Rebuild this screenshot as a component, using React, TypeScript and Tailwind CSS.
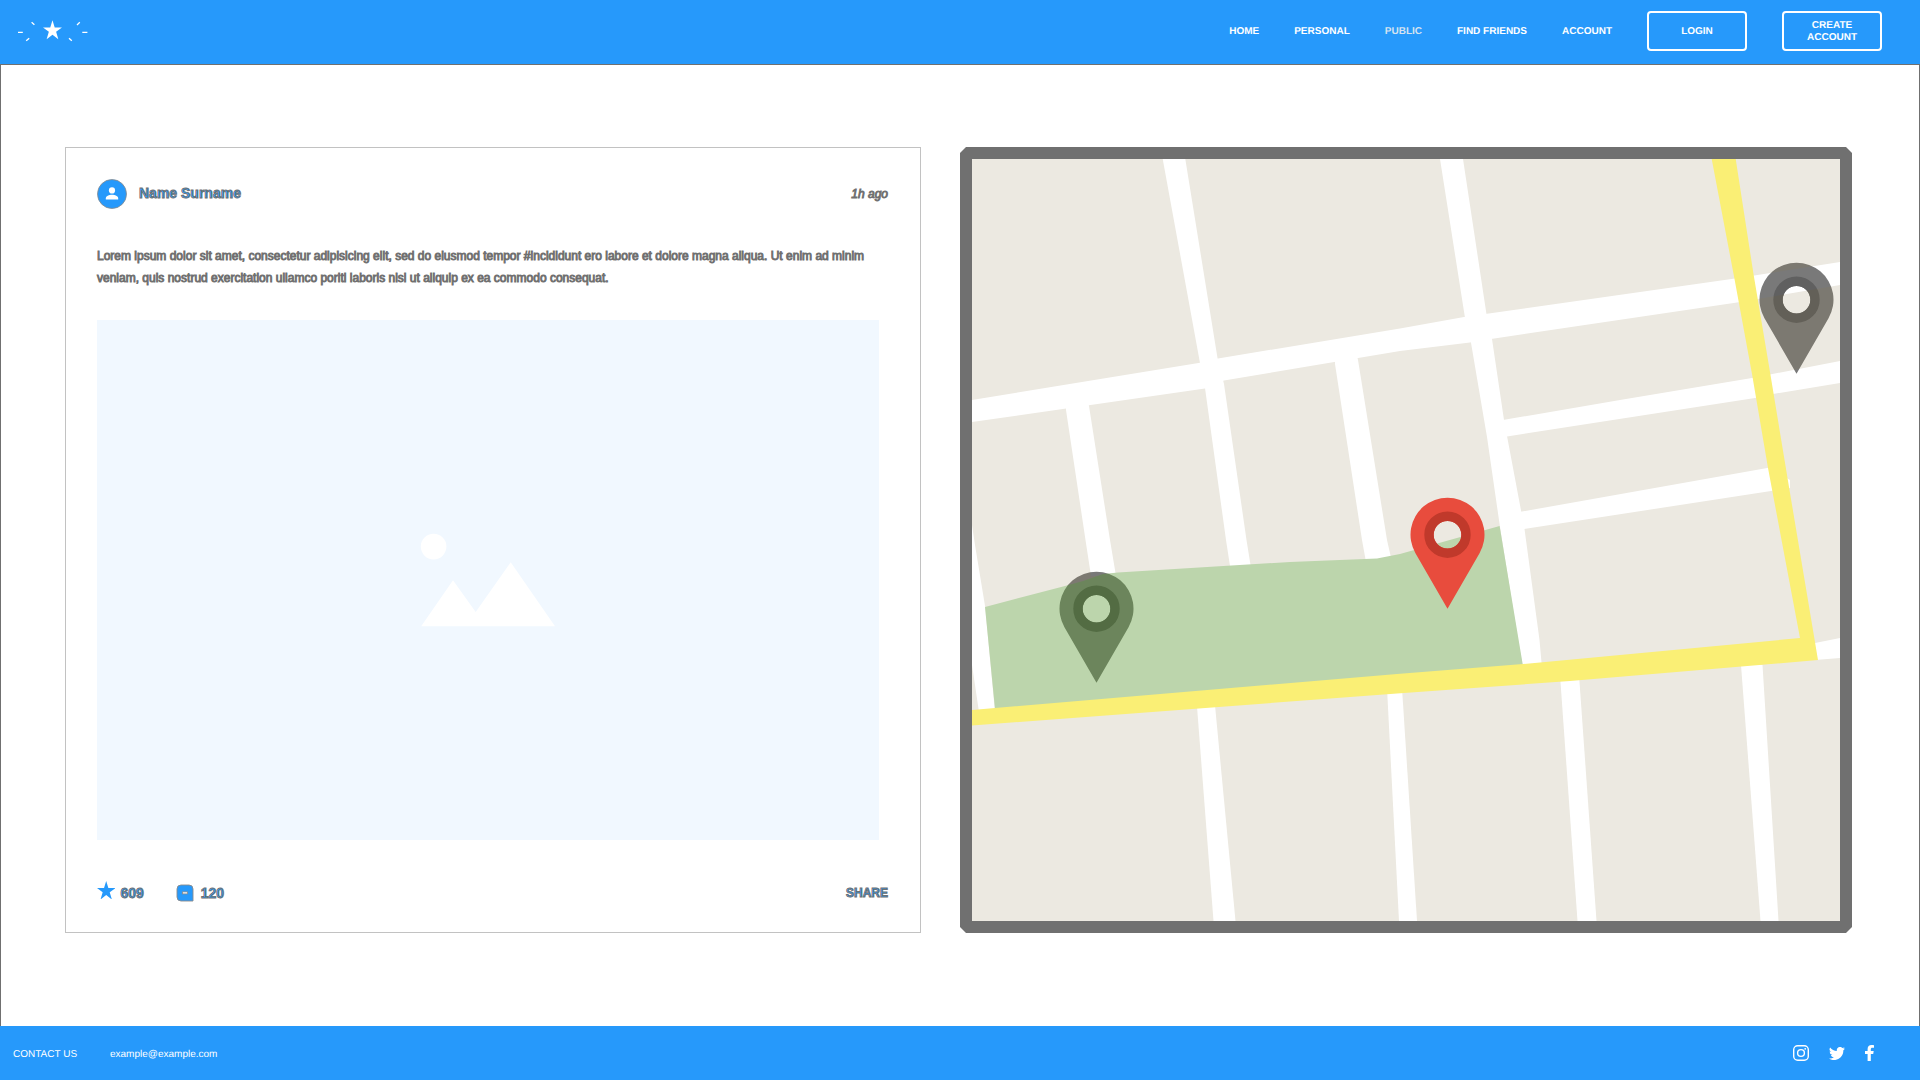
const NAV = ["HOME", "PERSONAL", "PUBLIC", "FIND FRIENDS", "ACCOUNT"];

const STAR = "12,0 14.83,9.12 24,9.12 16.6,14.6 19.4,24 12,18.3 4.6,24 7.4,14.6 0,9.12 9.17,9.12";

const ROADS = [
  "1162.7,159 1185.3,159 1217.5,358 1224,384 1246.5,540 1251,568 1230.3,568 1226,540 1205,388 1200,363",
  "972,400 1200,362.7 1218,358.5 1400,328.5 1464,317 1735,278.5 1840,262 1840,285 1737,302.5 1491,339 1470,342.5 1400,351 1224,380.5 1205,388.5 972,422",
  "1066,400 1087,398 1089,406 1110,540 1116,576 1091,576 1085.5,540 1066,410",
  "1335,356 1356,352 1358,360 1387,540 1392,562 1366,562 1362,540 1335,364",
  "1440,159 1463,159 1486.3,313 1492,339 1504,420 1524.5,529 1539.5,640 1542,668 1523,668 1518,640 1500,527 1487,437 1470.7,341 1464.7,316",
  "1500,420.5 1620,400 1752,378 1840,361 1840,383 1773,394 1755,398 1507,436.5 1500,436.5",
  "1514,513 1770,467.5 1790,480 1790,488 1771,491 1524,529 1514,530",
  "1815,643 1840,638 1840,658 1815,660",
  "972,525 975,545 985.2,607 995,712 979,712 972,665",
  "1196.5,700 1214.5,700 1235.5,921 1213.5,921",
  "1387,688 1402,688 1417,921 1399,921",
  "1560,675 1579,675 1596.5,921 1577.5,921",
  "1741,665 1762.5,665 1778.5,921 1760.5,921",
];

function Pin({ x, y, muted = false }: { x: number; y: number; muted?: boolean }) {
  return (
    <g transform={`translate(${x} ${y})`} className={muted ? "mix-blend-luminosity" : ""}>
      <path
        fillRule="evenodd"
        fill="#E84C3D"
        d="M0 74L-32.04 18.5A37 37 0 1 1 32.04 18.5ZM0 -13.8A13.8 13.8 0 1 0 0 13.8A13.8 13.8 0 1 0 0 -13.8Z"
      />
      <circle r="18.5" fill="none" stroke="#C0392B" strokeWidth="9.4" />
    </g>
  );
}

function Logo() {
  return (
    <svg className="-mt-0.5 ml-[17px] h-6 w-[72px]" viewBox="17 19 72 24">
      <g transform="translate(43 20.2) scale(0.79)">
        <polygon points={STAR} fill="#fff" />
      </g>
      <path
        d="M18 32.4H22.8M31.6 22.3L34.4 24.8M29.2 38.2L26.2 40.8M79.8 22.3L77 25M82.3 32.4H87.4M69 38.2L71.8 40.8"
        stroke="#fff"
        strokeWidth="1.3"
        fill="none"
      />
    </svg>
  );
}

function Header() {
  return (
    <header className="flex h-16 items-center justify-between bg-[#2699FB] pr-[38px] [text-rendering:geometricPrecision]">
      <Logo />
      <nav className="flex items-center gap-[35px] text-[10px] leading-3 font-bold text-white">
        {NAV.map((n) => (
          <a key={n} className={n === "PUBLIC" ? "text-[#D5E3F0]" : ""}>
            {n}
          </a>
        ))}
        <button className="-mt-0.5 h-10 w-[100px] rounded-[4px] border-2 border-white pt-0.5 font-bold [text-rendering:geometricPrecision]">
          LOGIN
        </button>
        <button className="-mt-0.5 h-10 w-[100px] rounded-[4px] border-2 border-white px-4 pt-0.5 font-bold [text-rendering:geometricPrecision]">
          CREATE ACCOUNT
        </button>
      </nav>
    </header>
  );
}

function Post() {
  return (
    <article className="flex h-[786px] w-[856px] flex-col border border-[#C2C2C2] pr-[32px] pl-[31px]">
      <div className="mt-[31px] flex h-[30px] items-center">
        <svg className="h-[30px] w-[30px]" viewBox="0 0 30 30">
          <circle cx="15" cy="15" r="14.5" fill="#2699FB" stroke="#8A8A8A" strokeWidth="0.8" />
          <circle cx="15" cy="11.4" r="3.1" fill="#fff" />
          <path d="M8.8 20.6V19.4C8.8 17.2 12 15.8 15 15.8S21.2 17.2 21.2 19.4V20.6Z" fill="#fff" />
        </svg>
        <span className="ml-3 flex-1 pb-0.5 text-sm leading-[18px] font-bold text-[#2699FB] [-webkit-text-stroke:0.9px_#707070]">
          Name Surname
        </span>
        <span className="text-xs text-[#707070] italic [-webkit-text-stroke:0.9px_#707070]">1h ago</span>
      </div>
      <p className="mt-9 text-xs leading-[22px] whitespace-nowrap text-[#707070] [-webkit-text-stroke:0.9px_#707070]">
        Lorem ipsum dolor sit amet, consectetur adipisicing elit, sed do eiusmod tempor #incididunt ero labore et dolore
        magna aliqua. Ut enim ad minim
        <br />
        veniam, quis nostrud exercitation ullamco poriti laboris nisi ut aliquip ex ea commodo consequat.
      </p>
      <svg className="mt-[31px] h-[520px] w-[782px] bg-[#F1F8FF]" viewBox="97 320 782 520">
        <circle cx="433.6" cy="546.6" r="12.8" fill="#fff" />
        <polygon points="421.2,626.3 453,580.3 475.7,612 510.7,562.3 555,626.3" fill="#fff" />
      </svg>
      <div className="mt-[42px] flex h-5 items-center text-sm leading-5 font-bold text-[#2699FB]">
        <svg className="-mt-1 mr-[5px] h-[18.6px] w-[18.4px]" viewBox="0 0 24 24">
          <polygon points={STAR} fill="#2699FB" />
        </svg>
        <span className="mr-8 pt-0.5 [-webkit-text-stroke:0.9px_#707070]">609</span>
        <svg className="mt-px mr-[7px] h-[18px] w-[18px]" viewBox="0 0 18 18">
          <path
            d="M5 1H13Q17 1 17 5V17H5Q1 17 1 13V5Q1 1 5 1Z"
            fill="#2699FB"
            stroke="#8A8A8A"
            strokeWidth="0.9"
          />
          <rect x="6.4" y="7.9" width="5" height="2" fill="#fff" stroke="#8A8A8A" strokeWidth="0.8" />
        </svg>
        <span className="flex-1 pt-0.5 [-webkit-text-stroke:0.9px_#707070]">120</span>
        <span className="pt-px text-xs [-webkit-text-stroke:0.9px_#707070]">SHARE</span>
      </div>
    </article>
  );
}

function CityMap() {
  return (
    <section className="h-[786px] w-[892px] bg-[#707070] p-3 [clip-path:polygon(6px_0,calc(100%-6px)_0,100%_6px,100%_calc(100%-6px),calc(100%-6px)_100%,6px_100%,0_calc(100%-6px),0_6px)]">
      <svg className="block h-[762px] w-[868px]" viewBox="972 159 868 762">
        <rect x="972" y="159" width="868" height="762" fill="#ECE9E1" />
        {ROADS.map((p) => (
          <polygon key={p} points={p} fill="#fff" />
        ))}
        <polygon
          points="985,607 1065,586 1083,581 1103,574 1118,572.5 1290,562 1377,558.5 1400,554 1499.6,526 1523,666 995.3,712"
          fill="#BCD5AC"
        />
        <polygon
          points="1711.7,159 1735.7,159 1753.5,274 1770,372 1789,487 1818,660 1570,681 1397,693.5 972,725.5 972,710 1397,674 1523,664 1800,638 1768,468 1752,374 1734.5,279"
          fill="#FAEF75"
        />
        <Pin x={1447.5} y={534.7} />
        <Pin x={1096.5} y={608.7} muted />
        <Pin x={1796.5} y={299.7} muted />
      </svg>
    </section>
  );
}

function Footer() {
  return (
    <footer className="flex h-[54px] items-center bg-[#2699FB] pr-[46px] pl-[13px] text-[10px] text-white [text-rendering:geometricPrecision]">
      <span className="w-[97px] pt-0.5">CONTACT US</span>
      <span className="flex-1 pt-0.5">example@example.com</span>
      <svg className="mr-5 h-4 w-4" viewBox="0 0 16 16" fill="none" stroke="#fff" strokeWidth="1.4">
        <rect x="0.7" y="0.7" width="14.6" height="14.6" rx="4" />
        <circle cx="8" cy="8" r="3.4" />
        <circle cx="12.2" cy="3.8" r="0.9" fill="#fff" stroke="none" />
      </svg>
      <svg className="mr-5 h-[13px] w-4" viewBox="0 3 24 19.5" preserveAspectRatio="none" fill="#fff">
        <path d="M24 5.3a10 10 0 0 1-2.8.8 5 5 0 0 0 2.1-2.7 10 10 0 0 1-3.1 1.2 4.9 4.9 0 0 0-8.4 4.5A14 14 0 0 1 1.7 3.9a4.9 4.9 0 0 0 1.5 6.6 5 5 0 0 1-2.2-.6v.1a4.9 4.9 0 0 0 3.9 4.8 5 5 0 0 1-2.2.1 4.9 4.9 0 0 0 4.6 3.4A9.9 9.9 0 0 1 0 20.3a14 14 0 0 0 21.5-12.4A10 10 0 0 0 24 5.3z" />
      </svg>
      <svg className="h-4 w-[9px]" viewBox="0 0 9 16" fill="#fff">
        <path d="M2.6 16V9H0V6.1H2.6V4C2.6 1.4 4.1 0 6.5 0 7.6 0 9 .2 9 .2V2.7H7.5C6.2 2.7 5.8 3.4 5.8 4.3V6.1H8.7L8.2 9H5.8V16Z" />
      </svg>
    </footer>
  );
}

export default function App() {
  return (
    <div className="flex h-[1080px] w-[1920px] flex-col bg-white font-['Liberation_Sans',Arial,sans-serif]">
      <Header />
      <main className="flex flex-1 gap-[39px] border border-b-0 border-[#707070] pt-[82px] pl-16">
        <Post />
        <CityMap />
      </main>
      <Footer />
    </div>
  );
}
